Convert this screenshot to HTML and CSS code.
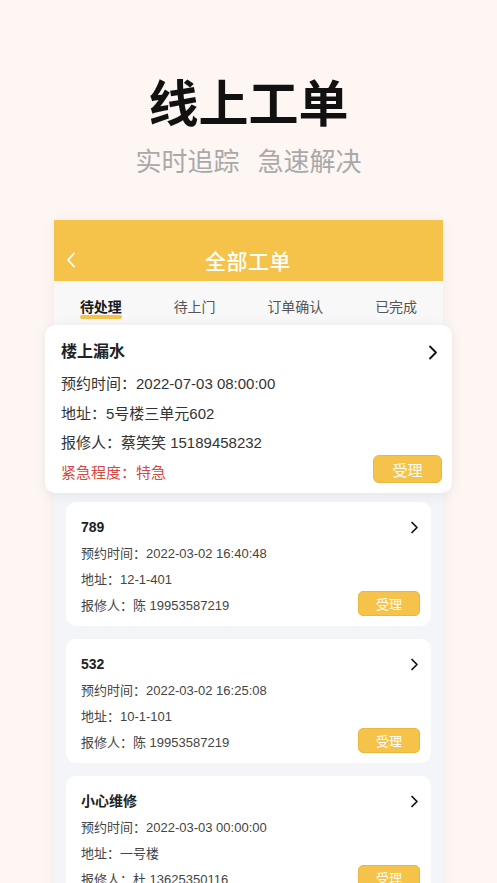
FILE: index.html
```html
<!DOCTYPE html>
<html lang="zh">
<head>
<meta charset="utf-8">
<title>线上工单</title>
<link rel="stylesheet" href="styles.css">
</head>
<body>
<div class="page">
  <header class="hero">
    <h1 class="hero-title">线上工单</h1>
    <p class="hero-sub"><span>实时追踪</span><span>急速解决</span></p>
  </header>

  <section class="panel">
    <div class="nav">
      <svg class="nav-back" width="10" height="16" viewBox="0 0 10 16"><polyline points="8,1.5 2,8 8,14.5" fill="none" stroke="#fff" stroke-width="1.8" stroke-linecap="round" stroke-linejoin="round"/></svg>
      <div class="nav-title">全部工单</div>
    </div>
    <div class="tabs">
      <div class="tab active"><span>待处理</span><i class="tab-bar"></i></div>
      <div class="tab"><span>待上门</span></div>
      <div class="tab"><span>订单确认</span></div>
      <div class="tab"><span>已完成</span></div>
    </div>

    <div class="list">
      <div class="card featured">
        <div class="card-head">
          <div class="card-title">楼上漏水</div>
          <svg class="chev" width="10" height="15" viewBox="0 0 10 15"><polyline points="2,1.5 8,7.5 2,13.5" fill="none" stroke="#111" stroke-width="1.8" stroke-linecap="round" stroke-linejoin="round"/></svg>
        </div>
        <div class="row">预约时间：2022-07-03 08:00:00</div>
        <div class="row">地址：5号楼三单元602</div>
        <div class="row">报修人：蔡笑笑 15189458232</div>
        <div class="row last"><span class="urgent">紧急程度：特急</span><button class="btn">受理</button></div>
      </div>

      <div class="card">
        <div class="card-head">
          <div class="card-title">789</div>
          <svg class="chev" width="9" height="13" viewBox="0 0 9 13"><polyline points="2,1.5 7,6.5 2,11.5" fill="none" stroke="#111" stroke-width="1.7" stroke-linecap="round" stroke-linejoin="round"/></svg>
        </div>
        <div class="row">预约时间：2022-03-02 16:40:48</div>
        <div class="row">地址：12-1-401</div>
        <div class="row last"><span>报修人：陈 19953587219</span><button class="btn">受理</button></div>
      </div>

      <div class="card">
        <div class="card-head">
          <div class="card-title">532</div>
          <svg class="chev" width="9" height="13" viewBox="0 0 9 13"><polyline points="2,1.5 7,6.5 2,11.5" fill="none" stroke="#111" stroke-width="1.7" stroke-linecap="round" stroke-linejoin="round"/></svg>
        </div>
        <div class="row">预约时间：2022-03-02 16:25:08</div>
        <div class="row">地址：10-1-101</div>
        <div class="row last"><span>报修人：陈 19953587219</span><button class="btn">受理</button></div>
      </div>

      <div class="card">
        <div class="card-head">
          <div class="card-title">小心维修</div>
          <svg class="chev" width="9" height="13" viewBox="0 0 9 13"><polyline points="2,1.5 7,6.5 2,11.5" fill="none" stroke="#111" stroke-width="1.7" stroke-linecap="round" stroke-linejoin="round"/></svg>
        </div>
        <div class="row">预约时间：2022-03-03 00:00:00</div>
        <div class="row">地址：一号楼</div>
        <div class="row last"><span>报修人：杜 13625350116</span><button class="btn">受理</button></div>
      </div>
    </div>
  </section>
</div>
</body>
</html>
```
FILE: styles.css
```css
* { box-sizing: border-box; }
html, body { margin: 0; padding: 0; }
body {
  width: 497px;
  height: 883px;
  overflow: hidden;
  background: #fdf6f3;
  font-family: "Liberation Sans", "Noto Sans CJK SC", sans-serif;
  color: #333;
}
.page { width: 497px; }

.hero { padding-top: 75px; text-align: center; }
.hero-title {
  margin: 0;
  font-size: 50px;
  line-height: 60px;
  font-weight: 700;
  color: #111;
  letter-spacing: 0;
}
.hero-sub {
  margin: 9px 0 0;
  font-size: 26px;
  line-height: 36px;
  color: #a9a9a9;
  display: flex;
  justify-content: center;
  gap: 18px;
}

.panel {
  margin: 40px auto 0;
  width: 389px;
  background: #f3f5f9;
  box-shadow: 0 0 14px rgba(0,0,0,0.05);
}
.nav {
  height: 61px;
  background: #f5c34a;
  display: flex;
  align-items: center;
  padding: 18px 13px 0 12px;
}
.nav-back { flex: none; }
.nav-title {
  flex: 1;
  text-align: center;
  color: #fff;
  font-size: 21px;
  font-weight: 500;
  margin-right: 10px;
  letter-spacing: 0.5px;
}

.tabs {
  height: 44px;
  background: #f8f8f8;
  display: flex;
  justify-content: space-around;
}
.tab {
  padding-top: 17px;
  font-size: 14px;
  line-height: 18px;
  color: #555;
  display: flex;
  flex-direction: column;
  align-items: center;
}
.tab.active { color: #1a1a1a; font-weight: 700; }
.tab-bar {
  display: block;
  width: 100%;
  height: 4px;
  margin-top: -1px;
  border-radius: 2px;
  background: #f5c34a;
}

.list { padding: 1px 12px 0; }

.card {
  background: #fff;
  border-radius: 10px;
  padding: 15px 11px 7px 15px;
  margin-bottom: 13px;
}
.card-head {
  display: flex;
  justify-content: space-between;
  align-items: center;
  padding-right: 1px;
}
.card-title {
  font-size: 14px;
  line-height: 20px;
  font-weight: 700;
  color: #222;
}
.chev { display: block; }
.row {
  font-size: 13px;
  line-height: 26px;
  color: #444;
}
.card-head + .row { margin-top: 4px; }
.row.last {
  display: flex;
  justify-content: space-between;
  align-items: center;
}
.btn {
  width: 62px;
  height: 25px;
  padding: 0;
  border: 1px solid #eab73f;
  border-radius: 5px;
  background: #f5c34a;
  color: #fff;
  font-family: inherit;
  font-size: 13px;
  margin-top: -5px;
}

.card.featured {
  margin: -1px -21px 9px -21px;
  padding: 16px 10px 6px 16px;
  box-shadow: 0 2px 14px rgba(0,0,0,0.07);
}
.featured .card-head { padding-right: 4px; }
.featured .card-title { font-size: 16px; line-height: 22px; font-weight: 600; }
.featured .card-head + .row { margin-top: 6px; }
.featured .row { font-size: 15px; line-height: 29.5px; color: #333; }
.featured .urgent { color: #d64a3f; }
.featured .btn {
  width: 69px;
  height: 28px;
  font-size: 15px;
  border-radius: 6px;
  margin-top: -6px;
}
```
